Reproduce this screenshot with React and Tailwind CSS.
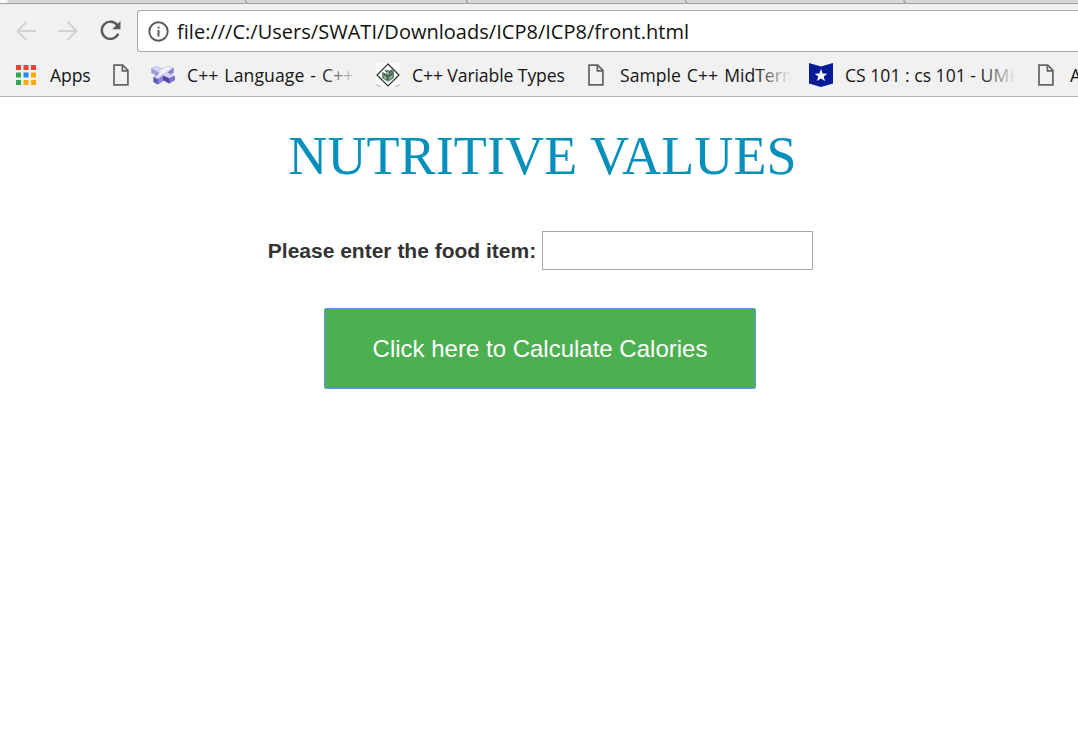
import React from "react";

const UI_FONT = "font-['Open_Sans','Noto_Sans',sans-serif]";

function PageIcon() {
  return (
    <svg width="16" height="22" viewBox="0 0 16 22" fill="none" stroke="#636363" strokeWidth="1.7" className="block shrink-0">
      <path d="M1 1.2H9.8L14.9 6.3V20.8H1Z" />
      <path d="M9.4 1.2V6.9H14.9" />
    </svg>
  );
}

function AppsIcon() {
  const colors = ["#ea4335", "#ea4335", "#ea4335", "#34a853", "#1a8cee", "#fbab09", "#34a853", "#f9ab0b", "#f9ab0b"];
  return (
    <svg width="20" height="20" viewBox="0 0 20 20" className="block shrink-0">
      {colors.map((c, i) => (
        <rect key={i} x={(i % 3) * 7.5} y={Math.floor(i / 3) * 7.5} width="5" height="5" fill={c} />
      ))}
    </svg>
  );
}

function PlusPlusIcon() {
  return (
    <svg width="24" height="20" viewBox="0 0 24 20" className="block shrink-0">
      <path d="M0.500 3L6 1L11 3.500L17 1L22.500 3V7.500L20 9L24 11V15L18 18.500L13 15.500L7 19.500L2.500 17V12L5 10L0.500 8Z" fill="#8a86d8" />
      <path d="M1 3L6 1L11 4L17 1L22.500 3L16.500 7.500L23.500 11L18 13L12 10.500L7 14L3 12L8 9L1 5Z" fill="#d2d1f5" />
      <path d="M10 4.500L17 1.500L21 3L14 7.500L9 10.500L5 12L9 8.500Z" fill="#f1f1fc" />
      <path d="M0.500 3.500L8 7.500L5 10L0.500 8Z" fill="#9c99d8" />
      <path d="M2.500 12L7 14.500V19.500L2.500 17Z" fill="#625aae" />
      <path d="M7 14.500L12 11V15.500L7 19.500Z" fill="#8b86dd" />
      <path d="M12 10.500L18 13.500V18.500L12 15Z" fill="#4d46a0" />
      <path d="M18 13.500L24 11V15L18 18.500Z" fill="#7771cf" />
      <path d="M16.500 7.500L22.500 3V7.500L20 9Z" fill="#8580cf" />
    </svg>
  );
}

function DiamondIcon() {
  return (
    <svg width="24" height="24" viewBox="0 0 24 24" className="block shrink-0">
      <rect width="24" height="24" fill="#fbfbfb" />
      <path d="M12 1L23 12L12 23L1 12Z" fill="#fff" stroke="#262c28" strokeWidth="1.2" />
      <path d="M6 9L10 11V8L12 6.5L14 8L16.5 6L18 8V15L12 19L6 15Z" fill="#688d76" />
      <path d="M7 10L11.5 13V17M12.500 13L17 10M9 7L11 9M13 10L16 7" stroke="#3d5847" strokeWidth="1.1" fill="none" />
      <path d="M8 14L10 15M14 15L16 13.5M10 10H13" stroke="#c6d5cb" strokeWidth="1" />
      <path d="M0 21.5Q1.5 23.5 5 23.2M24 21.5Q22.5 23.5 19 23.2" stroke="#a9a9a9" fill="none" />
    </svg>
  );
}

function BadgeIcon() {
  return (
    <svg width="24" height="24" viewBox="0 0 24 24" className="block shrink-0">
      <path d="M0 0L12 3.4L24 0V20.4L12 24L0 20.4Z" fill="#061b96" />
      <path d="M12 6L13.7 10.5L18.3 10.7L14.7 13.5L16 18L12 15.4L8 18L9.3 13.5L5.7 10.7L10.3 10.5Z" fill="#fff" />
    </svg>
  );
}

function Bookmark({ icon, label, box, text = "", fade = false }) {
  return (
    <div className={`flex h-full shrink-0 items-center ${box}`}>
      {icon}
      {label && (
        <span className={`relative overflow-hidden whitespace-nowrap ${text}`}>
          {label}
          {fade && <span className="absolute inset-y-0 right-0 w-9 bg-linear-to-r from-transparent to-[#f1f1f1]" />}
        </span>
      )}
    </div>
  );
}

function TabStrip() {
  return (
    <svg width="1078" height="4" viewBox="0 0 1078 4" className="block shrink-0">
      <rect width="1078" height="4" fill="#d8d8d8" />
      <path d="M0 0H7L8 3H0Z" fill="#fafafa" />
      <path d="M245 0L247 3M466 0L468 3M685 0L687 3M903.500 0L905.500 3" stroke="#999" strokeWidth="1.3" />
      <rect y="3" width="1078" height="1" fill="#a0a0a0" />
    </svg>
  );
}

export default function App() {
  return (
    <div className="flex h-[751px] w-[1078px] flex-col overflow-hidden bg-white">
      <header className={`flex h-[97px] shrink-0 flex-col border-b border-[#b4b4b4] bg-[#f1f1f1] text-black ${UI_FONT}`}>
        <TabStrip />
        <div className="flex h-[54px] shrink-0 items-center pl-4">
          <svg width="20" height="20" viewBox="0 0 20 20" fill="none" stroke="#d2d2d2" strokeWidth="2" className="shrink-0">
            <path d="M20 10H2M10.500 1L1.500 10L10.500 19" />
          </svg>
          <svg width="20" height="20" viewBox="0 0 20 20" fill="none" stroke="#d2d2d2" strokeWidth="2" className="ml-[22px] shrink-0">
            <path d="M0 10H18M9.500 1L18.500 10L9.500 19" />
          </svg>
          <svg width="22" height="22" viewBox="0 0 22 22" className="ml-[22px] shrink-0">
            <path d="M17.300 5.200A8.600 8.600 0 1 0 18.200 13.800" fill="none" stroke="#5a5a5a" strokeWidth="2.400" />
            <path d="M20.500 1V9.200H12.300Z" fill="#5a5a5a" />
          </svg>
          <div className="ml-[15px] flex h-[42px] flex-1 items-center rounded-l-[3px] border border-r-0 border-[#a8a8a8] bg-white pl-[10px]">
            <svg width="21" height="21" viewBox="0 0 21 21" className="shrink-0">
              <circle cx="10.500" cy="10.500" r="9.200" fill="none" stroke="#5a5a5a" strokeWidth="1.900" />
              <rect x="9.500" y="9" width="2" height="6.500" fill="#5a5a5a" />
              <rect x="9.500" y="5.500" width="2" height="2" fill="#5a5a5a" />
            </svg>
            <span className="ml-[8px] pt-[2px] text-[20px] leading-[28px] tracking-[0.02px] whitespace-nowrap text-[#111]">
              file:///C:/Users/SWATI/Downloads/ICP8/ICP8/front.html
            </span>
          </div>
        </div>
        <nav className="flex h-[34px] shrink-0 items-center overflow-hidden pl-4 text-[17.6px] leading-6 text-[#151515]">
          <Bookmark icon={<AppsIcon />} label="Apps" box="w-[97px]" text="ml-[14px] tracking-[-0.1px]" />
          <Bookmark icon={<PageIcon />} box="w-[38px]" />
          <Bookmark icon={<PlusPlusIcon />} label="C++ Language - C++" box="w-[225px]" text="ml-[12px] w-[171px] tracking-[0.1px] [word-spacing:1.2px]" fade />
          <Bookmark icon={<DiamondIcon />} label="C++ Variable Types" box="w-[212px]" text="ml-[12px] tracking-[-0.1px]" />
          <Bookmark icon={<PageIcon />} label="Sample C++ MidTerm" box="w-[221px]" text="ml-[16px] w-[171px] [word-spacing:1.5px]" fade />
          <Bookmark icon={<BadgeIcon />} label="CS 101 : cs 101 - UMKC" box="w-[229px]" text="ml-[12px] w-[171px]" fade />
          <Bookmark icon={<PageIcon />} label="A" box="w-[60px]" text="ml-[16px]" />
        </nav>
      </header>

      <main className="flex flex-1 flex-col items-center font-['Liberation_Sans',Arial,sans-serif]">
        <h1 className="mt-[28px] ml-[7px] whitespace-nowrap font-['Liberation_Serif','Times_New_Roman',serif] text-[54px] leading-[62px] font-normal tracking-[0.12px] text-[#058fbb]">
          NUTRITIVE VALUES
        </h1>
        <div className="mt-[44px] ml-[3px] flex items-center">
          <label htmlFor="food" className="whitespace-nowrap text-[21px] font-bold text-[#333]">
            Please enter the food item:
          </label>
          <input id="food" type="text" className="ml-[6px] h-[39px] w-[271px] border border-[#a9a9a9] bg-white outline-none" />
        </div>
        <button
          type="button"
          className="mt-[38px] ml-[2px] h-[81px] w-[432px] rounded-[2px] border-[1.5px] border-[#5b9be0] bg-[#4caf50] text-[24px] whitespace-nowrap text-white"
        >
          Click here to Calculate Calories
        </button>
      </main>
    </div>
  );
}
